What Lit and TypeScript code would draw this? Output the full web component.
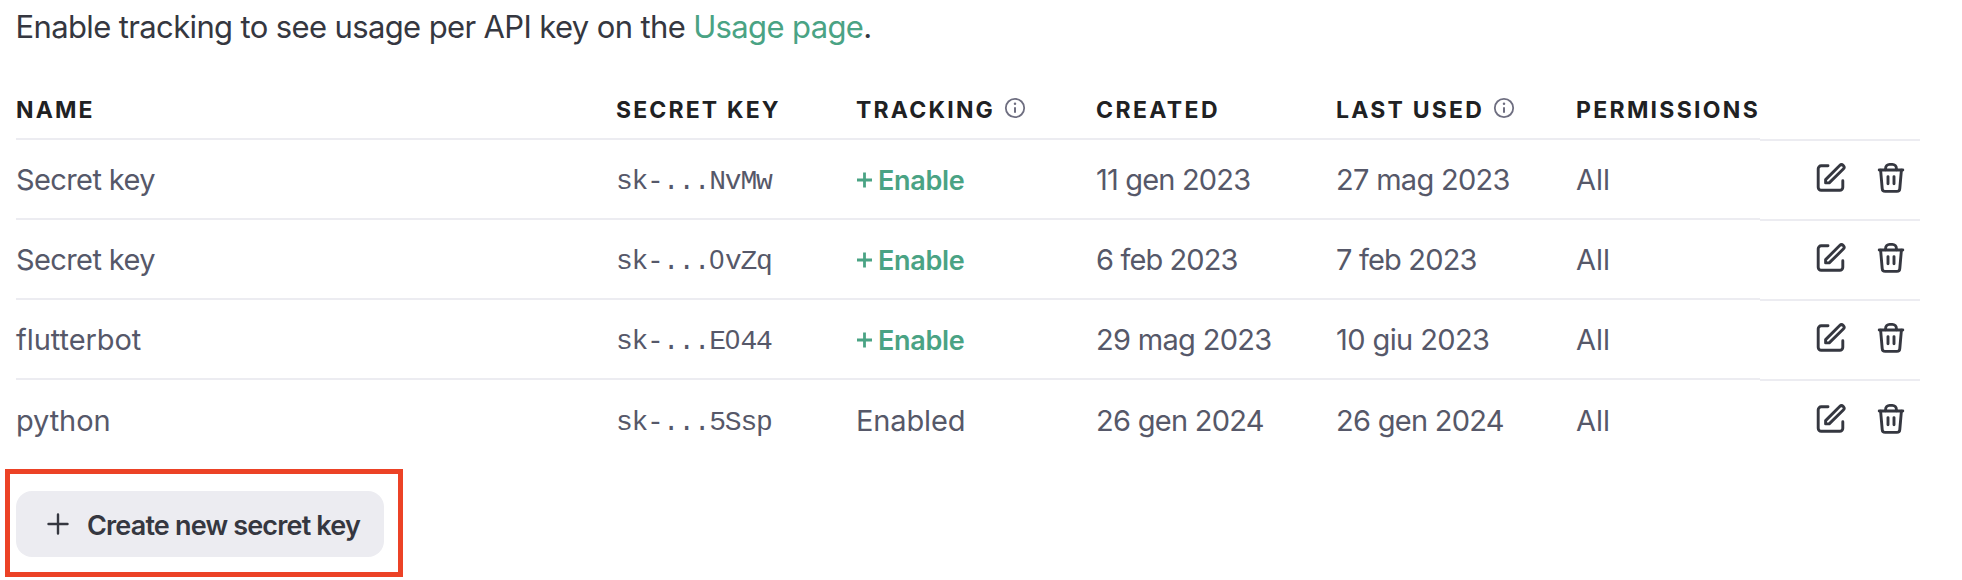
import { LitElement, html, css, svg } from "lit";
import { customElement } from "lit/decorators.js";
import { styleMap } from "lit/directives/style-map.js";

/** A piece of text with its letter spacing in pixels. */
type Label = [text: string, spacing: number];

interface ApiKey {
  name: Label;
  secret: string;
  tracked: boolean;
  created: Label;
  lastUsed: Label;
}

const KEYS: ApiKey[] = [
  { name: ["Secret key", -0.6], secret: "sk-...NvMw", tracked: false, created: ["11 gen 2023", -0.82], lastUsed: ["27 mag 2023", -0.7] },
  { name: ["Secret key", -0.6], secret: "sk-...0vZq", tracked: false, created: ["6 feb 2023", -0.88], lastUsed: ["7 feb 2023", -0.82] },
  { name: ["flutterbot", -0.05], secret: "sk-...E044", tracked: false, created: ["29 mag 2023", -0.68], lastUsed: ["10 giu 2023", -0.6] },
  { name: ["python", -0.1], secret: "sk-...5Ssp", tracked: true, created: ["26 gen 2024", -0.72], lastUsed: ["26 gen 2024", -0.72] },
];

const HEADINGS: { label: Label; info?: boolean }[] = [
  { label: ["NAME", 2.1] },
  { label: ["SECRET KEY", 2.15] },
  { label: ["TRACKING", 2.2], info: true },
  { label: ["CREATED", 2.4] },
  { label: ["LAST USED", 2.2], info: true },
  { label: ["PERMISSIONS", 2.3] },
];

const label = ([text, spacing]: Label) =>
  html`<span style=${styleMap({ letterSpacing: `${spacing}px` })}>${text}</span>`;

const infoIcon = html`<svg class="info" width="22" height="22" viewBox="0 0 22 22" fill="none" stroke="currentColor" stroke-width="1.8">
  <circle cx="11" cy="11" r="9.2" />
  <path d="M11 10.3v5.4" stroke-width="2" />
  <circle cx="11" cy="6.8" r="1.25" fill="currentColor" stroke="none" />
</svg>`;

const lines = (body: unknown) => html`<svg width="32" height="32" viewBox="0 0 32 32" fill="none" stroke="currentColor" stroke-width="2.9" stroke-linecap="round" stroke-linejoin="round">${body}</svg>`;

const editIcon = lines(svg`
  <path d="M13 3.8H6.2a3 3 0 0 0-3 3v18.5a3 3 0 0 0 3 3h18.6a3 3 0 0 0 3-3v-6.5" />
  <path d="M10.6 20.9v-3.3L24.7 3.5a2.5 2.5 0 0 1 3.6 3.6L14.2 20.9z" />`);

const trashIcon = lines(svg`
  <path d="M4.2 8h23.6" />
  <path d="M10.6 7.8v-1.4a4 4 0 0 1 4-4h2.8a4 4 0 0 1 4 4v1.4" />
  <path d="M5.6 8.2l1.6 18.3a3 3 0 0 0 3 2.9h11.6a3 3 0 0 0 3-2.9L26.4 8.2" />
  <path d="M13 14.6v7.2M19 14.6v7.2" />`);

@customElement("app-root")
export class AppRoot extends LitElement {
  static styles = css`
    :host {
      display: block;
      box-sizing: border-box;
      width: 1962px;
      height: 580px;
      overflow: hidden;
      background: #fff;
      font-family: Inter, "Liberation Sans", sans-serif;
      color: #353740;
    }
    svg { display: block; flex: none; }
    .intro {
      margin: 0 0 0 15.5px;
      height: 80px;
      font-size: 31px;
      line-height: 53px;
      letter-spacing: -0.63px;
      white-space: pre;
    }
    .link { color: #4aa384; text-decoration: none; }
    .table { margin-left: 16px; width: 1904px; }
    .row {
      display: grid;
      grid-template-columns: 600px 240px 240px 240px 240px 184px 160px;
      height: 80px;
      font-size: 29px;
      color: #565869;
      white-space: nowrap;
    }
    .row.head {
      height: 60px;
      font-size: 23px;
      font-weight: 700;
      color: #202123;
    }
    .cell {
      display: flex;
      align-items: center;
      box-sizing: border-box;
      border-bottom: 2px solid #ececf1;
    }
    .head .cell { padding-top: 2px; }
    .cell.last { border-bottom: 0; }
    .actions { position: relative; top: 1px; padding-left: 55px; gap: 28px; color: #353740; }
    .actions svg { margin-top: -4px; }
    .info { margin: -4px 0 0 9px; color: #6e6e80; }
    .secret {
      padding-top: 4px;
      font: 28px "Liberation Mono", monospace;
      letter-spacing: -1.25px;
    }
    .zero {
      display: inline-block;
      width: 15.55px;
      font-family: "Liberation Sans", sans-serif;
      font-size: 27px;
      letter-spacing: 0;
    }
    .enable { display: flex; gap: 5px; padding-top: 2px; font-size: 27px; font-weight: 600; letter-spacing: -0.3px; color: #4aa384; }
    .enable svg { align-self: center; }
    .callout {
      box-sizing: border-box;
      width: 398px;
      height: 108px;
      margin: 8.5px 0 0 4.5px;
      padding: 17.5px 6.5px;
      border: 5px solid #ec4226;
    }
    .create {
      display: flex;
      align-items: center;
      box-sizing: border-box;
      width: 368px;
      height: 66px;
      padding: 0 0 0 30px;
      border: 0;
      border-radius: 16px;
      background: #ececf1;
      color: #353740;
      font: 600 27px Inter, "Liberation Sans", sans-serif;
      letter-spacing: -0.83px;
      white-space: nowrap;
      gap: 17px;
    }
    .create-text { padding-top: 2px; }
  `;

  private secret(text: string) {
    return html`<span>${text.split(/(0)/).map((part) => (part === "0" ? html`<span class="zero">0</span>` : part))}</span>`;
  }

  private row(key: ApiKey, index: number) {
    const cell = index === KEYS.length - 1 ? "cell last" : "cell";
    return html`<div class="row">
      <div class=${cell}>${label(key.name)}</div>
      <div class="${cell} secret">${this.secret(key.secret)}</div>
      <div class=${cell}>
        ${key.tracked
          ? label(["Enabled", -0.15])
          : html`<span class="enable"><svg width="17" height="18" viewBox="0 0 17 18" fill="none" stroke="currentColor" stroke-width="2.8"><path d="M1 9h15M8.5 1.5v15" /></svg><span>Enable</span></span>`}
      </div>
      <div class=${cell}>${label(key.created)}</div>
      <div class=${cell}>${label(key.lastUsed)}</div>
      <div class=${cell}>All</div>
      <div class="${cell} actions">${editIcon}${trashIcon}</div>
    </div>`;
  }

  render() {
    return html`
      <p class="intro">Enable tracking to see usage per API key on the <a class="link">Usage page</a>.</p>
      <div class="table">
        <div class="row head">
          ${HEADINGS.map((h) => html`<div class="cell">${label(h.label)}${h.info ? infoIcon : ""}</div>`)}
          <div class="cell actions"></div>
        </div>
        ${KEYS.map((key, i) => this.row(key, i))}
      </div>
      <div class="callout">
        <button class="create">
          <svg width="24" height="24" viewBox="0 0 24 24" fill="none" stroke="currentColor" stroke-width="2.4" stroke-linecap="round"><path d="M2.5 12h19M12 2.5v19" /></svg>
          <span class="create-text">Create new secret key</span>
        </button>
      </div>
    `;
  }
}
